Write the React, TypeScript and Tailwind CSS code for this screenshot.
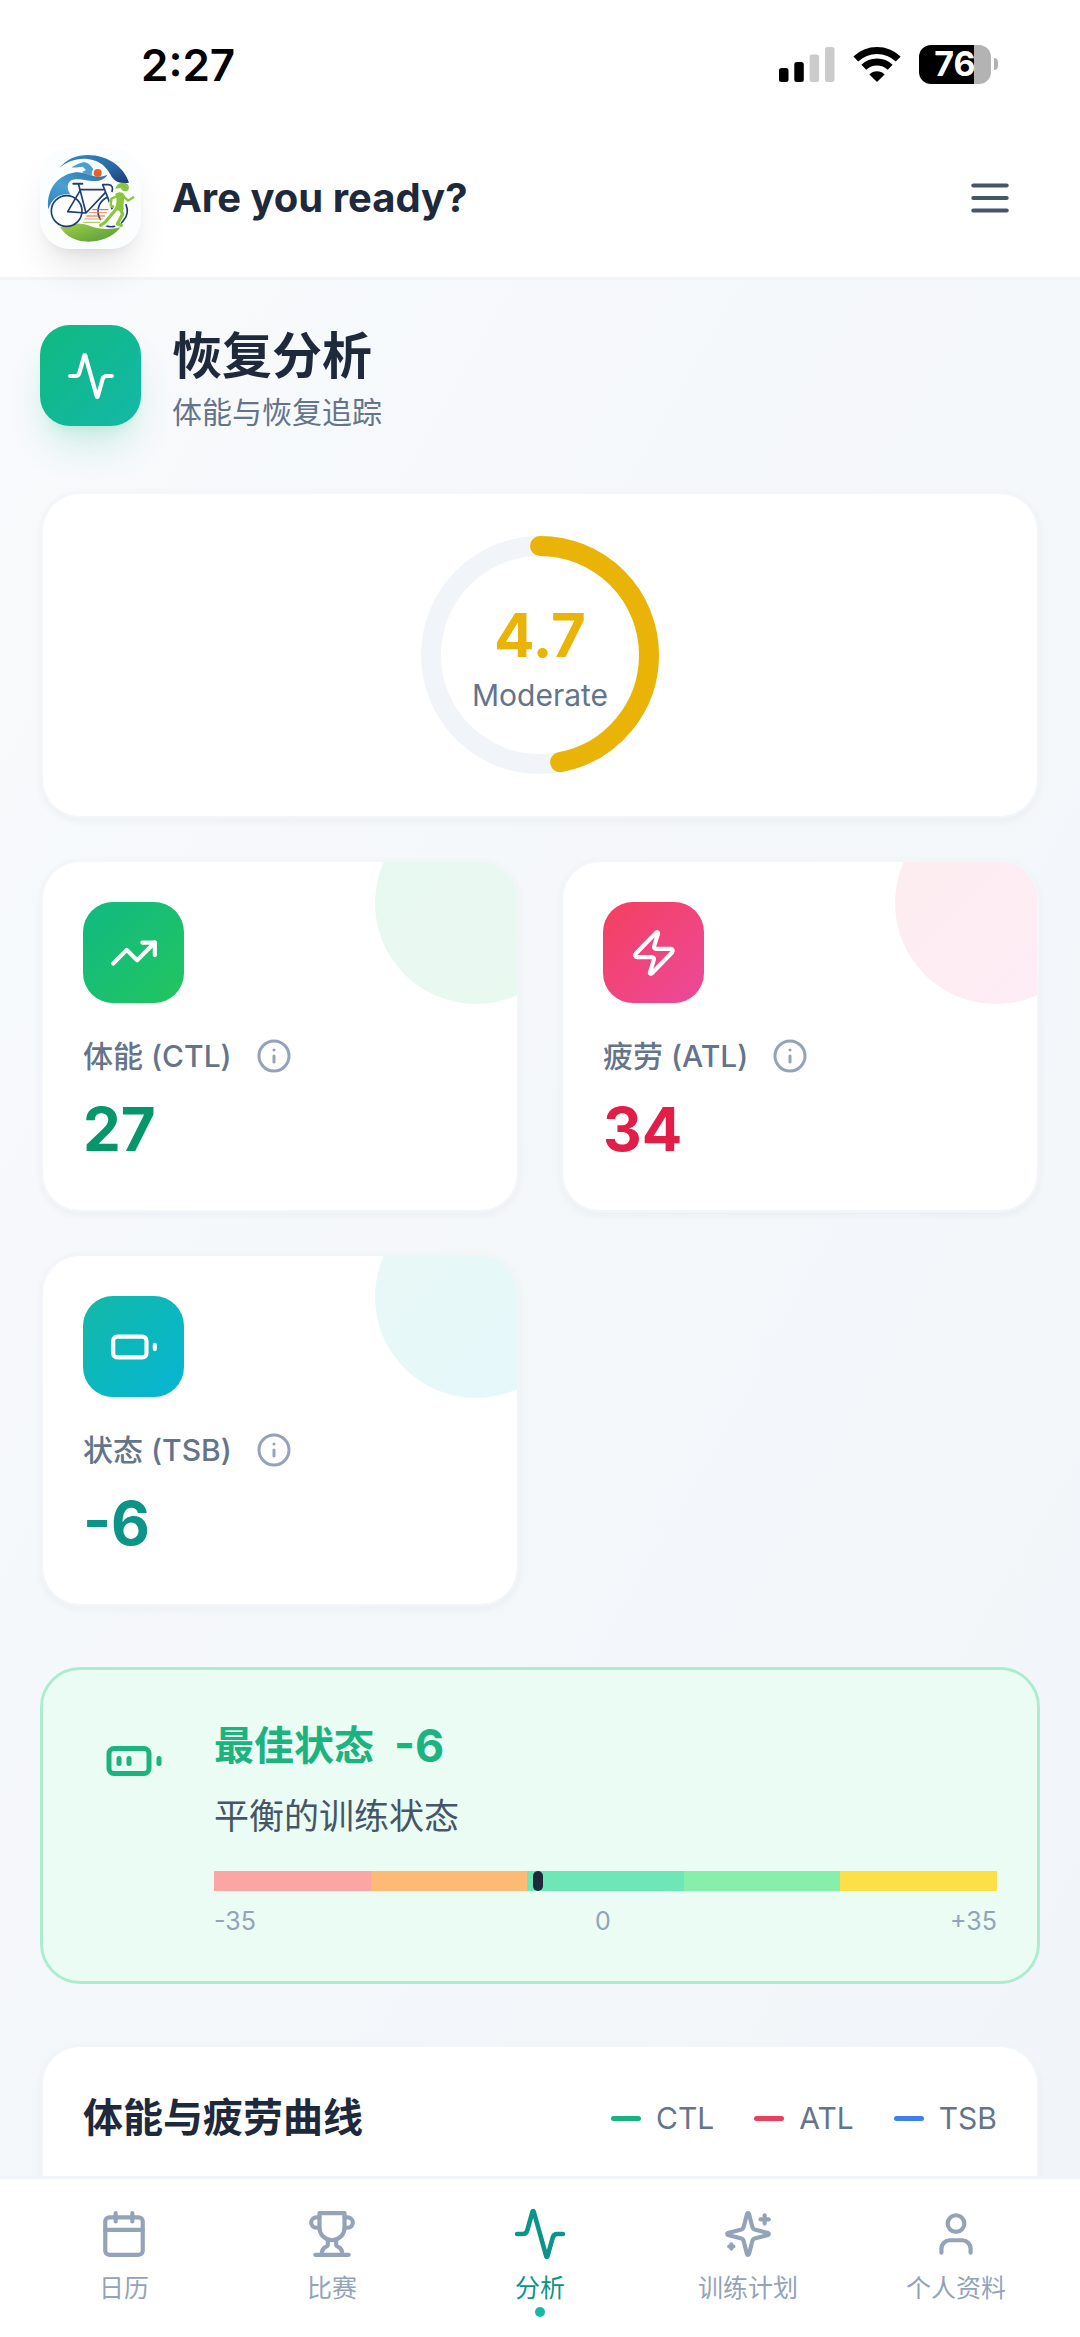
import type { ReactNode } from "react";

type IconProps = { className?: string; children?: ReactNode };

function Icon({ className, children }: IconProps) {
  return (
    <svg
      viewBox="0 0 24 24"
      fill="none"
      stroke="currentColor"
      strokeWidth={2}
      strokeLinecap="round"
      strokeLinejoin="round"
      className={className}
      aria-hidden="true"
    >
      {children}
    </svg>
  );
}

const ActivityIcon = ({ className }: IconProps) => (
  <Icon className={className}>
    <path d="M22 12h-2.48a2 2 0 0 0-1.93 1.46l-2.35 8.36a.25.25 0 0 1-.48 0L9.24 2.18a.25.25 0 0 0-.48 0l-2.35 8.36A2 2 0 0 1 4.49 12H2" />
  </Icon>
);

const TrendIcon = ({ className }: IconProps) => (
  <Icon className={className}>
    <path d="M22 7 13.5 15.5 8.5 10.5 2 17" />
    <path d="M16 7h6v6" />
  </Icon>
);

const ZapIcon = ({ className }: IconProps) => (
  <Icon className={className}>
    <path d="M4 14a1 1 0 0 1-.78-1.63l9.9-10.2a.5.5 0 0 1 .86.46l-1.92 6.02A1 1 0 0 0 13 10h7a1 1 0 0 1 .78 1.63l-9.9 10.2a.5.5 0 0 1-.86-.46l1.92-6.02A1 1 0 0 0 11 14z" />
  </Icon>
);

const BatteryIcon = ({ className }: IconProps) => (
  <Icon className={className}>
    <rect x="2" y="7" width="16" height="10" rx="2" />
    <path d="M22 11v2" />
  </Icon>
);

const BatteryMediumIcon = ({ className }: IconProps) => (
  <Icon className={className}>
    <rect x="2" y="7" width="16" height="10" rx="2" />
    <path d="M22 11v2M6 11v2M10 11v2" />
  </Icon>
);

const InfoIcon = ({ className }: IconProps) => (
  <Icon className={className}>
    <circle cx="12" cy="12" r="10" />
    <path d="M12 16v-4" />
    <path d="M12 8h.01" />
  </Icon>
);

const MenuIcon = ({ className }: IconProps) => (
  <Icon className={className}>
    <path d="M4 6h16M4 12h16M4 18h16" />
  </Icon>
);

const CalendarIcon = ({ className }: IconProps) => (
  <Icon className={className}>
    <path d="M8 2v4M16 2v4" />
    <rect x="3" y="4" width="18" height="18" rx="2" />
    <path d="M3 10h18" />
  </Icon>
);

const TrophyIcon = ({ className }: IconProps) => (
  <Icon className={className}>
    <path d="M6 9H4.5a2.5 2.5 0 0 1 0-5H6" />
    <path d="M18 9h1.5a2.5 2.5 0 0 0 0-5H18" />
    <path d="M4 22h16" />
    <path d="M10 14.66V17c0 .55-.47.98-.97 1.21C7.85 18.75 7 20.24 7 22" />
    <path d="M14 14.66V17c0 .55.47.98.97 1.21C16.15 18.75 17 20.24 17 22" />
    <path d="M18 2H6v7a6 6 0 0 0 12 0V2Z" />
  </Icon>
);

const SparklesIcon = ({ className }: IconProps) => (
  <Icon className={className}>
    <path d="M9.937 15.5A2 2 0 0 0 8.5 14.063l-6.135-1.582a.5.5 0 0 1 0-.962L8.5 9.936A2 2 0 0 0 9.937 8.5l1.582-6.135a.5.5 0 0 1 .963 0L14.063 8.5A2 2 0 0 0 15.5 9.937l6.135 1.581a.5.5 0 0 1 0 .964L15.5 14.063a2 2 0 0 0-1.437 1.437l-1.582 6.135a.5.5 0 0 1-.963 0z" />
    <path d="M20 3v4M22 5h-4M4 17v2M5 18H3" />
  </Icon>
);

const UserIcon = ({ className }: IconProps) => (
  <Icon className={className}>
    <path d="M19 21v-2a4 4 0 0 0-4-4H9a4 4 0 0 0-4 4v2" />
    <circle cx="12" cy="7" r="4" />
  </Icon>
);

function Logo() {
  return (
    <svg viewBox="12 8 303 303" className="size-full" role="img" aria-label="Triathlon logo">
      <defs>
        <linearGradient id="deep" x1="0" y1="0" x2="1" y2="1">
          <stop offset="0" stopColor="#2f8fc4" />
          <stop offset="0.6" stopColor="#2a67a5" />
          <stop offset="1" stopColor="#1c3a72" />
        </linearGradient>
        <linearGradient id="wave" x1="1" y1="0" x2="0" y2="1">
          <stop offset="0" stopColor="#2b6ea8" />
          <stop offset="0.55" stopColor="#4aa0d0" />
          <stop offset="1" stopColor="#2f7fbd" />
        </linearGradient>
        <linearGradient id="grass" x1="0" y1="0" x2="1" y2="1">
          <stop offset="0" stopColor="#a5cf4a" />
          <stop offset="1" stopColor="#4f9a35" />
        </linearGradient>
      </defs>
      <path d="M69 70C92 40 122 29 155 29C216 29 265 66 279 112C262 116 240 112 230 98C214 72 200 46 155 41C122 38 92 48 69 70Z" fill="url(#deep)" />
      <path d="M37 192C30 140 58 92 112 82C140 76 165 94 188 94C200 94 210 90 214 88C206 103 186 110 160 106C136 102 112 98 102 108C90 120 96 138 104 148C76 142 48 156 37 192Z" fill="url(#wave)" />
      <path d="M107 66C120 58 138 50 146 51C158 53 164 60 172 72C168 78 166 84 168 92C156 90 146 86 138 80L150 74L140 64C130 64 118 68 107 66Z" fill="#4b9fca" />
      <circle cx="185" cy="83" r="12" fill="#e2622a" />
      <path d="M72 246C105 232 134 232 160 241C190 252 222 254 254 246C232 274 196 289 157 289C120 289 91 274 72 246Z" fill="url(#grass)" />
      <g fill="none" stroke="#1f3f73" strokeWidth="5" strokeLinecap="round" strokeLinejoin="round">
        <circle cx="92" cy="197" r="46" fill="#fff" />
        <path d="M211 157A46 46 0 0 0 193 222" />
        <path d="M206 240A46 46 0 0 0 262 226A46 46 0 0 0 270 178" />
        <path d="M202 133H134L95 199L147 203" />
        <path d="M128 118L150 203L208 142" />
        <path d="M112 115H139" strokeWidth="6" />
        <path d="M228 138C232 128 228 118 218 118H200L228 190" />
      </g>
      <g fill="none" strokeLinecap="round" strokeWidth="3">
        <path d="M170 193H216" stroke="#e2622a" />
        <path d="M160 202H212" stroke="#e58d6a" />
        <path d="M152 212H206" stroke="#e2622a" />
        <path d="M146 221H200" stroke="#cfa94a" />
        <path d="M142 231H192" stroke="#9cc84f" />
      </g>
      <g fill="none" stroke="#fff" strokeLinecap="round" strokeLinejoin="round">
        <path d="M232 154L226 178M254 186L228 204L206 236M250 188L256 206L244 238M262 152L276 166L292 156" strokeWidth="16" />
      </g>
      <g fill="none" stroke="#8cc63f" strokeLinecap="round" strokeLinejoin="round">
        <path d="M240 154L226 160L224 180L232 184" strokeWidth="7" />
        <path d="M244 188L228 206L208 230L194 240" strokeWidth="10" />
        <path d="M252 188L260 206L244 236L256 240" strokeWidth="10" />
        <path d="M262 152L276 166L292 156" strokeWidth="7" />
      </g>
      <path d="M238 146C248 138 262 140 266 150C266 166 260 176 264 192C254 200 242 196 236 190C242 176 244 164 238 146Z" fill="#8cc63f" />
      <path d="M242 121C250 112 264 110 274 116C282 124 280 138 268 138C260 138 256 132 254 128L238 130Z" fill="#8cc63f" />
    </svg>
  );
}

function StatusBar() {
  return (
    <div className="flex h-[119px] items-start justify-between bg-white pt-[38px] pr-[82px] pl-[141px] text-black">
      <time className="text-[44px] leading-[54px] font-semibold">2:27</time>
      <div className="flex h-[52px] items-center gap-[18px]">
        <svg viewBox="0 0 56 35" className="h-[35px] w-[56px]" aria-label="Signal">
          <rect x="0" y="21" width="9.5" height="14" rx="2.5" />
          <rect x="15.3" y="15" width="9.5" height="20" rx="2.5" />
          <rect x="30.6" y="7.5" width="9.5" height="27.5" rx="2.5" fill="#cbcbcb" />
          <rect x="46" y="0" width="9.5" height="35" rx="2.5" fill="#cbcbcb" />
        </svg>
        <svg viewBox="0 0 48 35" className="h-[35px] w-[48px]" aria-label="Wi-Fi">
          <g fill="none" stroke="#000" strokeWidth="7">
            <path d="M2.8 12.1A30.5 30.5 0 0 1 45.2 12.1" />
            <path d="M10.8 20.3A19 19 0 0 1 37.2 20.3" />
          </g>
          <path d="M24 35L16.4 27.4A10.8 10.8 0 0 1 31.6 27.4Z" />
        </svg>
        <div className="flex items-center gap-[3px]" aria-label="Battery">
          <div className="flex h-[39px] w-[72px] items-center justify-center rounded-[12px] bg-[linear-gradient(to_right,#000_76%,#b3b3b3_76%)] text-[34px] leading-none font-bold text-white">
            76
          </div>
          <div className="h-[12px] w-[4px] rounded-r-full bg-[#b3b3b3]" />
        </div>
      </div>
    </div>
  );
}

function Header() {
  return (
    <header className="relative z-10 flex h-[161px] shrink-0 items-center justify-between border-b-[3px] border-[#f1f5f9] bg-white pr-[65px] pl-10">
      <div className="flex items-center gap-[31px]">
        <div className="size-[101px] overflow-hidden rounded-[30px] bg-[#fbfdfe] shadow-[0_25px_38px_-8px_rgba(0,0,0,0.1),0_10px_15px_-10px_rgba(0,0,0,0.1)]">
          <Logo />
        </div>
        <span className="text-[40px] leading-[50px] font-bold text-[#1e293b]">Are you ready?</span>
      </div>
      <button type="button" aria-label="Menu" className="text-[#475569]">
        <MenuIcon className="size-[50px]" />
      </button>
    </header>
  );
}

const cardClass =
  "rounded-[40px] border-[3px] border-[#f1f5f9]/60 bg-white shadow-[0_3px_7px_rgba(15,23,42,0.04)] bg-clip-padding";

function ScoreRing({ score, label }: { score: number; label: string }) {
  const length = 2 * Math.PI * 109;
  return (
    <section className={`${cardClass} flex justify-center p-10`}>
      <div className="relative flex size-[242px] flex-col items-center justify-center">
        <svg viewBox="0 0 242 242" className="absolute inset-0 size-full -rotate-90" aria-hidden="true">
          <circle cx="121" cy="121" r="109" fill="none" stroke="#f1f5f9" strokeWidth="20" />
          <circle
            cx="121"
            cy="121"
            r="109"
            fill="none"
            stroke="#eab308"
            strokeWidth="20"
            strokeLinecap="round"
            strokeDasharray={`${(length * score) / 10} ${length}`}
          />
        </svg>
        <span className="relative text-[60px] leading-[80px] font-bold text-[#eab308]">{score}</span>
        <span className="relative text-[30px] leading-[40px] text-[#64748b]">{label}</span>
      </div>
    </section>
  );
}

type MetricProps = { icon: ReactNode; label: string; value: string; gradient: string; color: string };

function Metric({ icon, label, value, gradient, color }: MetricProps) {
  return (
    <section className={`${cardClass} relative overflow-hidden p-10`}>
      <div className={`absolute -top-[60px] -right-[60px] size-[202px] rounded-full bg-linear-to-br opacity-10 ${gradient}`} />
      <div className={`mb-[30px] flex size-[101px] items-center justify-center rounded-[30px] bg-linear-to-br text-white ${gradient}`}>
        {icon}
      </div>
      <div className="flex h-[46px] items-center gap-6">
        <h2 className="text-[30px] leading-[46px] font-medium text-[#64748b]">{label}</h2>
        <button type="button" aria-label={`${label} info`} className="text-[#94a3b8]">
          <InfoIcon className="size-[36px]" />
        </button>
      </div>
      <p className={`mt-[10px] text-[60px] leading-[81px] font-bold ${color}`}>{value}</p>
    </section>
  );
}

function FormStatus({ value }: { value: number }) {
  return (
    <section className="flex gap-[30px] rounded-[40px] border-[3px] border-[#aeecd0] bg-[#eafcf4] p-10">
      <div className="flex size-[101px] shrink-0 items-center justify-center text-[#1cb37f]">
        <BatteryMediumIcon className="size-[60px]" />
      </div>
      <div className="min-w-0 flex-1">
        <div className="flex h-[71px] items-center gap-5 text-[#1cb37f]">
          <h2 className="text-[40px] leading-[71px] font-semibold">最佳状态</h2>
          <span className="text-[45px] leading-[71px] font-bold">{value}</span>
        </div>
        <p className="mt-[10px] text-[35px] leading-[50px] text-[#475569]">平衡的训练状态</p>
        <div className="relative mt-[30px] grid h-5 grid-cols-5">
          <div className="bg-[#fca5a5]" />
          <div className="bg-[#fdba74]" />
          <div className="bg-[#6ee7b7]" />
          <div className="bg-[#86efac]" />
          <div className="bg-[#fde047]" />
          <div
            className="absolute top-0 h-5 w-[10px] -translate-x-1/2 rounded-full bg-[#1e293b]"
            style={{ left: `${((value + 35) / 70) * 100}%` }}
          />
        </div>
        <div className="mt-[10px] flex justify-between text-[25px] leading-[40px] text-[#94a3b8]">
          <span>-35</span>
          <span>0</span>
          <span>+35</span>
        </div>
      </div>
    </section>
  );
}

const legend = [
  { name: "CTL", color: "bg-[#17b47e]" },
  { name: "ATL", color: "bg-[#e9405f]" },
  { name: "TSB", color: "bg-[#3f80ee]" },
];

const tabs = [
  { name: "日历", Glyph: CalendarIcon, active: false },
  { name: "比赛", Glyph: TrophyIcon, active: false },
  { name: "分析", Glyph: ActivityIcon, active: true },
  { name: "训练计划", Glyph: SparklesIcon, active: false },
  { name: "个人资料", Glyph: UserIcon, active: false },
];

export default function App() {
  return (
    <div className="flex h-dvh flex-col overflow-hidden bg-white font-['Inter','Noto_Sans_CJK_SC',sans-serif]" lang="zh-CN">
      <StatusBar />
      <Header />
      <main className="flex min-h-0 flex-1 flex-col gap-[60px] overflow-y-auto bg-linear-to-br from-[#f8fafc] to-[#f1f5f9] px-10 pt-10 [scrollbar-width:none] [&>*]:shrink-0">
        <div className="flex items-center gap-[31px]">
          <div className="flex size-[101px] items-center justify-center rounded-[30px] bg-linear-to-br from-[#10b981] to-[#14b8a6] text-white shadow-[0_25px_38px_-8px_rgba(16,185,129,0.2),0_10px_15px_-10px_rgba(16,185,129,0.2)]">
            <ActivityIcon className="size-[50px]" />
          </div>
          <div>
            <h1 className="text-[50px] leading-[73px] font-bold text-[#1e293b]">恢复分析</h1>
            <p className="text-[30px] leading-[38px] text-[#64748b]">体能与恢复追踪</p>
          </div>
        </div>

        <div className="flex flex-col gap-10">
          <ScoreRing score={4.7} label="Moderate" />
          <div className="grid grid-cols-2 gap-10">
            <Metric
              icon={<TrendIcon className="size-[50px]" />}
              label="体能 (CTL)"
              value="27"
              gradient="from-[#10b981] to-[#22c55e]"
              color="text-[#059669]"
            />
            <Metric
              icon={<ZapIcon className="size-[50px]" />}
              label="疲劳 (ATL)"
              value="34"
              gradient="from-[#f43f5e] to-[#ec4899]"
              color="text-[#e11d48]"
            />
            <Metric
              icon={<BatteryIcon className="size-[50px]" />}
              label="状态 (TSB)"
              value="-6"
              gradient="from-[#14b8a6] to-[#06b6d4]"
              color="text-[#0d9488]"
            />
          </div>
        </div>

        <FormStatus value={-6} />

        <section className={`${cardClass} min-h-[600px] p-10`}>
          <div className="flex h-[62px] items-center justify-between">
            <h2 className="text-[40px] leading-[60px] font-semibold text-[#1e293b]">体能与疲劳曲线</h2>
            <ul className="flex gap-10 text-[30px] leading-[40px] text-[#64748b]">
              {legend.map((item) => (
                <li key={item.name} className="flex items-center gap-[15px]">
                  <span className={`h-[5px] w-[30px] rounded-full ${item.color}`} />
                  {item.name}
                </li>
              ))}
            </ul>
          </div>
        </section>
      </main>

      <nav className="grid h-[161px] shrink-0 grid-cols-5 border-t-[3px] border-[#f1f5f9] bg-white px-5 pt-[30px]">
        {tabs.map(({ name, Glyph, active }) => (
          <a
            key={name}
            href="#"
            aria-current={active ? "page" : undefined}
            className={`relative flex flex-col items-center gap-[10px] self-start ${active ? "text-[#0d9488]" : "text-[#94a3b8]"}`}
          >
            <Glyph className={active ? "size-[50px] scale-110" : "size-[50px]"} />
            <span className="text-[25px] leading-[38px]">{name}</span>
            {active && <span className="absolute top-full size-[10px] rounded-full bg-[#14b8a6]" />}
          </a>
        ))}
      </nav>
    </div>
  );
}
